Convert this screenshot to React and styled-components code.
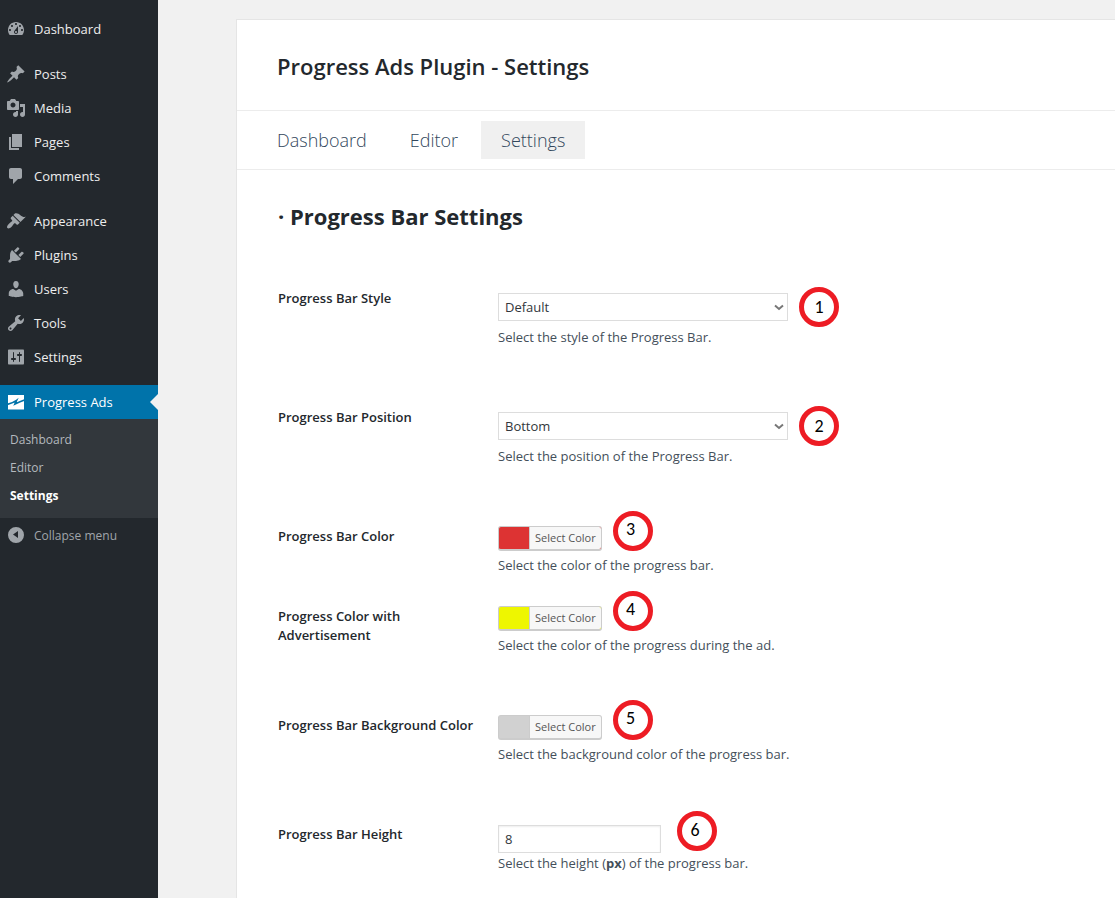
import React, { useState } from "react";
import styled, { createGlobalStyle, css } from "styled-components";

const GlobalStyle = createGlobalStyle`
  *, *::before, *::after { box-sizing: border-box; }
  body {
    margin: 0;
    background: #fff;
    color: #444;
    font: 13px/20px "Segoe UI", "Open Sans", "Noto Sans", sans-serif;
  }
`;

const ICONS = {
  dashboard:
    "M3.76 16h12.48c1.1-1.37 1.76-3.11 1.76-5 0-4.42-3.58-8-8-8s-8 3.58-8 8c0 1.89.66 3.63 1.76 5zM10 4c.55 0 1 .45 1 1s-.45 1-1 1-1-.45-1-1 .45-1 1-1zM6 6c.55 0 1 .45 1 1s-.45 1-1 1-1-.45-1-1 .45-1 1-1zm8 0c.55 0 1 .45 1 1s-.45 1-1 1-1-.45-1-1 .45-1 1-1zm-5.37 5.55L12 7v6c0 1.1-.9 2-2 2s-2-.9-2-2c0-.57.24-1.08.63-1.45zM4 10c.55 0 1 .45 1 1s-.45 1-1 1-1-.45-1-1 .45-1 1-1zm12 0c.55 0 1 .45 1 1s-.45 1-1 1-1-.45-1-1 .45-1 1-1zm-5 3c0-.55-.45-1-1-1s-1 .45-1 1 .45 1 1 1 1-.45 1-1z",
  posts:
    "M10.44 3.02l1.82-1.82 6.36 6.35-1.83 1.82c-1.05-.68-2.48-.57-3.41.36l-.75.75c-.92.93-1.04 2.35-.35 3.41l-1.83 1.82-2.41-2.41-2.8 2.79c-.42.42-3.38 2.71-3.8 2.29s1.86-3.39 2.28-3.81l2.79-2.79L4.1 9.36l1.83-1.82c1.05.69 2.48.57 3.4-.36l.75-.75c.93-.92 1.05-2.35.36-3.41z",
  media:
    "M13 11V4c0-.55-.45-1-1-1h-1.67L9 1H5L3.67 3H2c-.55 0-1 .45-1 1v7c0 .55.45 1 1 1h10c.55 0 1-.45 1-1zM7 4.5c1.38 0 2.5 1.12 2.5 2.5S8.38 9.5 7 9.5 4.5 8.38 4.5 7 5.62 4.5 7 4.5zM14 6h5v10.5c0 1.38-1.12 2.5-2.5 2.5S14 17.88 14 16.5s1.12-2.5 2.5-2.5c.17 0 .34.02.5.05V9h-3V6zm-4 8.05V13h2v3.5c0 1.38-1.12 2.5-2.5 2.5S7 17.88 7 16.5 8.12 14 9.5 14c.17 0 .34.02.5.05z",
  pages: "M6 15V2h10v13H6zm-1 1h8v2H3V5h2v11z",
  comments:
    "M5 2h9c1.1 0 2 .9 2 2v7c0 1.1-.9 2-2 2h-2l-5 5v-5H5c-1.1 0-2-.9-2-2V4c0-1.1.9-2 2-2z",
  appearance:
    "M14.48 11.06L7.41 3.99l1.5-1.5c.5-.56 2.3-.47 3.51.32 1.21.8 1.43 1.28 2.91 2.1 1.18.64 2.45 1.26 4.45.85zm-.71.71L6.7 4.7 4.93 6.47c-.39.39-.39 1.02 0 1.41l1.06 1.06c.39.39.39 1.03 0 1.42-.6.6-1.43 1.11-2.21 1.69-.35.26-.7.53-1.01.84C1.43 14.23.4 16.08 1.4 17.07c.99 1 2.84-.03 4.18-1.36.31-.31.58-.66.85-1.02.57-.78 1.08-1.61 1.69-2.21.39-.39 1.02-.39 1.41 0l1.06 1.06c.39.39 1.02.39 1.41 0z",
  plugins:
    "M13.11 4.36L9.87 7.6 8 5.73l3.24-3.24c.35-.34 1.05-.2 1.56.32.52.51.66 1.21.31 1.55zm-8 1.77l.91-1.12 9.01 9.01-1.19.84c-.71.71-2.63 1.16-3.82 1.16H6.14L4.9 17.26c-.59.59-1.54.59-2.12 0-.59-.58-.59-1.53 0-2.12l1.24-1.24v-3.88c0-1.13.4-3.19 1.09-3.89zm7.26 3.97l3.24-3.24c.34-.35 1.04-.21 1.55.31.52.51.66 1.21.31 1.55l-3.24 3.25z",
  users:
    "M10 9.25c-2.27 0-2.73-3.44-2.73-3.44C7 4.02 7.82 2 9.97 2c2.16 0 2.98 2.02 2.71 3.81 0 0-.41 3.44-2.68 3.44zm0 2.57L12.72 10c2.39 0 4.52 2.33 4.52 4.53v2.49s-3.65 1.13-7.24 1.13c-3.65 0-7.24-1.13-7.24-1.13v-2.49c0-2.25 1.94-4.48 4.47-4.48z",
  tools:
    "M16.68 9.77c-1.34 1.34-3.3 1.67-4.95.99l-5.41 6.52c-.99.99-2.59.99-3.58 0s-.99-2.59 0-3.57l6.52-5.42c-.68-1.65-.35-3.61.99-4.95 1.28-1.28 3.12-1.62 4.72-1.06l-2.89 2.89 2.82 2.82 2.86-2.87c.53 1.58.18 3.39-1.08 4.65zM3.81 16.21c.4.39 1.04.39 1.43 0 .4-.4.4-1.04 0-1.43-.39-.4-1.03-.4-1.43 0-.39.39-.39 1.03 0 1.43z",
  settings:
    "M18 16V4c0-1.1-.3-1.5-1-1.5H3c-.55 0-1 .45-1 1v13c0 .55.45 1 1 1h14c.7 0 1-.4 1-1.5zM8 11h1c.55 0 1 .45 1 1s-.45 1-1 1H8v1.5c0 .28-.22.5-.5.5s-.5-.22-.5-.5V13H6c-.55 0-1-.45-1-1s.45-1 1-1h1V5.5c0-.28.22-.5.5-.5s.5.22.5.5V11zm5-2h-1c-.55 0-1-.45-1-1s.45-1 1-1h1V5.5c0-.28.22-.5.5-.5s.5.22.5.5V7h1c.55 0 1 .45 1 1s-.45 1-1 1h-1v5.5c0 .28-.22.5-.5.5s-.5-.22-.5-.5V9z",
  collapse:
    "M10 2a8 8 0 1 0 0 16 8 8 0 0 0 0-16zm2 11l-5-3.5L12 6z",
};

const Shell = styled.div`
  display: flex;
  min-height: calc(100vh - 3px);
  background: #f1f1f1;
`;

const Sidebar = styled.nav`
  flex: 0 0 158px;
  padding-top: 12px;
  background: #23282d;
`;

const Menu = styled.ul`
  list-style: none;
  margin: 0 0 11px;
  padding: 0;
`;

const menuRow = css`
  display: flex;
  align-items: center;
  gap: 8px;
  width: 100%;
  height: 34px;
  padding: 0 6px;
  font-size: 13px;
  text-decoration: none;
  color: #eee;

  svg {
    flex: none;
    fill: #a0a5aa;
    fill-rule: evenodd;
  }
`;

const MenuLink = styled.a`
  ${menuRow}
  position: relative;

  ${(p) =>
    p.$active &&
    css`
      background: #0073aa;
      color: #fff;
      &::after {
        content: "";
        position: absolute;
        right: 0;
        top: 9px;
        border: 8px solid transparent;
        border-right-color: #f1f1f1;
        border-left-width: 0;
      }
    `}
`;

const CollapseButton = styled.button`
  ${menuRow}
  border: 0;
  background: none;
  color: #a0a5aa;
  font-family: inherit;
  font-size: 12px;
  text-align: left;
`;

const SubMenu = styled.ul`
  list-style: none;
  margin: 0;
  padding: 7px 0 8px;
  background: #32373c;
`;

const SubLink = styled.a`
  display: block;
  padding: 4px 10px;
  color: ${(p) => (p.$current ? "#fff" : "#b4b9be")};
  font-size: 12px;
  font-weight: ${(p) => (p.$current ? 700 : 400)};
  text-decoration: none;
`;

const Main = styled.main`
  display: flex;
  flex: 1;
  min-width: 0;
  padding: 19px 0 0 78px;
`;

const Card = styled.section`
  flex: 1;
  min-width: 0;
  border: 1px solid #e5e5e5;
  border-width: 1px 0 0 1px;
  background: #fff;
`;

const CardHeader = styled.header`
  padding: 30px 40px 28px;
  border-bottom: 1px solid #ececec;
`;

const Title = styled.h1`
  margin: 0;
  color: #23282d;
  font-size: 22px;
  line-height: 32px;
  font-weight: 600;
`;

const Tabs = styled.nav`
  display: flex;
  gap: 3px;
  padding: 10px 20px;
  border-bottom: 1px solid #ececec;
`;

const Tab = styled.a`
  padding: 0 20px;
  background: ${(p) => (p.$active ? "#f0f0f0" : "transparent")};
  color: #32475c;
  font-size: 18px;
  line-height: 38px;
  font-weight: 300;
  text-decoration: none;
`;

const Form = styled.form`
  padding: 30px 40px 0 41px;
`;

const SectionTitle = styled.h2`
  margin: 0 0 56px;
  color: #23282d;
  font-size: 22px;
  line-height: 32px;
  font-weight: 700;
`;

const Row = styled.div`
  display: grid;
  grid-template-columns: 200px minmax(0, 1fr);
  column-gap: 20px;
  margin-bottom: ${(p) => (p.$tight ? 31 : 60)}px;

  &:last-child {
    margin-bottom: 0;
  }
`;

const Label = styled.label`
  padding-top: 1px;
  color: #23282d;
  font-size: 13px;
  line-height: 19px;
  font-weight: 600;
`;

const Control = styled.div`
  position: relative;
  width: fit-content;
  max-width: 100%;
  margin: ${(p) => p.$margin || "0"};
`;

const Hint = styled.p`
  margin: 0;
  color: #444f5a;
`;

const boxed = css`
  display: block;
  height: 28px;
  border: 1px solid #ddd;
  border-radius: 0;
  background-color: #fff;
  color: #32373c;
  font: inherit;
  font-size: 13px;
`;

const Select = styled.select`
  ${boxed}
  width: 290px;
  max-width: 100%;
  padding: 0 24px 0 6px;
  appearance: none;
`;

const Chevron = styled.svg`
  position: absolute;
  right: 4px;
  top: 9px;
  fill: none;
  stroke: #777;
  stroke-width: 2;
  pointer-events: none;
`;

const NumberInput = styled.input`
  ${boxed}
  width: 163px;
  padding: 0 6px;
  box-shadow: inset 0 1px 2px rgba(0, 0, 0, 0.07);
`;

const ColorButton = styled.button`
  display: flex;
  height: 25px;
  padding: 0 0 0 30px;
  border: 1px solid #ccc;
  border-bottom-width: 2px;
  border-radius: 3px;
  background: ${(p) => p.$color};
  font: inherit;
  font-size: 11px;
`;

const ColorText = styled.span`
  padding: 0 5px;
  border-left: 1px solid #ccc;
  border-radius: 0 2px 2px 0;
  background: #f7f7f7;
  color: #555;
  line-height: 22px;
`;

const Marker = styled.span`
  position: absolute;
  left: 100%;
  top: 50%;
  display: grid;
  place-items: center;
  width: 40px;
  height: 40px;
  margin: ${(p) => (p.$raised ? "-28px" : "-20px")} 0 0 ${(p) => (p.$far ? 16 : 11)}px;
  padding: ${(p) => (p.$raised ? "0 4px 3px 0" : "0")};
  border: 5px solid #ed1c24;
  border-radius: 50%;
  color: #000;
  font-family: Calibri, Lato, sans-serif;
  font-size: 18px;
  line-height: 24px;
`;

const MENU = [
  [["dashboard", "Dashboard"]],
  [["posts", "Posts"], ["media", "Media"], ["pages", "Pages"], ["comments", "Comments"]],
  [
    ["appearance", "Appearance"],
    ["plugins", "Plugins"],
    ["users", "Users"],
    ["tools", "Tools"],
    ["settings", "Settings"],
  ],
];

function Icon({ name }) {
  return (
    <svg width="20" height="20" viewBox="0 0 20 20" aria-hidden="true">
      <path d={ICONS[name]} />
    </svg>
  );
}

function ProgressIcon() {
  return (
    <svg width="20" height="20" viewBox="0 0 20 20" aria-hidden="true">
      <rect x="2" y="3" width="16" height="14.5" fill="#fff" />
      <path
        d="M1.5 12.3Q7 11 10.6 8.4L9 12Q13 10 18.5 8"
        fill="none"
        stroke="#0073aa"
        strokeWidth="1.7"
      />
    </svg>
  );
}

function SelectRow({ id, label, options, hint, marker }) {
  return (
    <Row>
      <Label htmlFor={id}>{label}</Label>
      <div>
        <Control $margin="5px 0 6px">
          <Select id={id} defaultValue={options[0]}>
            {options.map((o) => (
              <option key={o}>{o}</option>
            ))}
          </Select>
          <Chevron width="10" height="10" viewBox="0 0 10 10" aria-hidden="true">
            <path d="M1 3.5L5 7l4-3.5" />
          </Chevron>
          <Marker>{marker}</Marker>
        </Control>
        <Hint>{hint}</Hint>
      </div>
    </Row>
  );
}

function ColorRow({ id, label, color, hint, marker, tight }) {
  return (
    <Row $tight={tight}>
      <Label htmlFor={id}>{label}</Label>
      <div>
        <Control $margin="0 0 4px">
          <ColorButton id={id} type="button" $color={color}>
            <ColorText>Select Color</ColorText>
          </ColorButton>
          <Marker $raised>{marker}</Marker>
        </Control>
        <Hint>{hint}</Hint>
      </div>
    </Row>
  );
}

export default function App() {
  const [height, setHeight] = useState("8");
  return (
    <>
      <GlobalStyle />
      <Shell>
        <Sidebar aria-label="Main menu">
          {MENU.map((group) => (
            <Menu key={group[0][0]}>
              {group.map(([icon, text]) => (
                <li key={icon}>
                  <MenuLink href="#">
                    <Icon name={icon} />
                    {text}
                  </MenuLink>
                </li>
              ))}
            </Menu>
          ))}
          <MenuLink href="#" $active>
            <ProgressIcon />
            Progress Ads
          </MenuLink>
          <SubMenu>
            <li><SubLink href="#">Dashboard</SubLink></li>
            <li><SubLink href="#">Editor</SubLink></li>
            <li><SubLink href="#" $current aria-current="page">Settings</SubLink></li>
          </SubMenu>
          <CollapseButton type="button">
            <Icon name="collapse" />
            Collapse menu
          </CollapseButton>
        </Sidebar>
        <Main>
          <Card>
            <CardHeader>
              <Title>Progress Ads Plugin - Settings</Title>
            </CardHeader>
            <Tabs aria-label="Plugin pages">
              <Tab href="#">Dashboard</Tab>
              <Tab href="#">Editor</Tab>
              <Tab href="#" $active aria-current="page">Settings</Tab>
            </Tabs>
            <Form>
              <SectionTitle>· Progress Bar Settings</SectionTitle>
              <SelectRow
                id="bar-style"
                label="Progress Bar Style"
                options={["Default"]}
                hint="Select the style of the Progress Bar."
                marker="1"
              />
              <SelectRow
                id="bar-position"
                label="Progress Bar Position"
                options={["Bottom", "Top"]}
                hint="Select the position of the Progress Bar."
                marker="2"
              />
              <ColorRow
                id="bar-color"
                label="Progress Bar Color"
                color="#dd3333"
                hint="Select the color of the progress bar."
                marker="3"
                tight
              />
              <ColorRow
                id="ad-color"
                label="Progress Color with Advertisement"
                color="#eef600"
                hint="Select the color of the progress during the ad."
                marker="4"
              />
              <ColorRow
                id="background-color"
                label="Progress Bar Background Color"
                color="#d1d1d1"
                hint="Select the background color of the progress bar."
                marker="5"
              />
              <Row>
                <Label htmlFor="bar-height">Progress Bar Height</Label>
                <div>
                  <Control $margin="1px 0 0">
                    <NumberInput
                      id="bar-height"
                      value={height}
                      onChange={(e) => setHeight(e.target.value)}
                    />
                    <Marker $raised $far>6</Marker>
                  </Control>
                  <Hint>
                    Select the height (<b>px</b>) of the progress bar.
                  </Hint>
                </div>
              </Row>
            </Form>
          </Card>
        </Main>
      </Shell>
    </>
  );
}
